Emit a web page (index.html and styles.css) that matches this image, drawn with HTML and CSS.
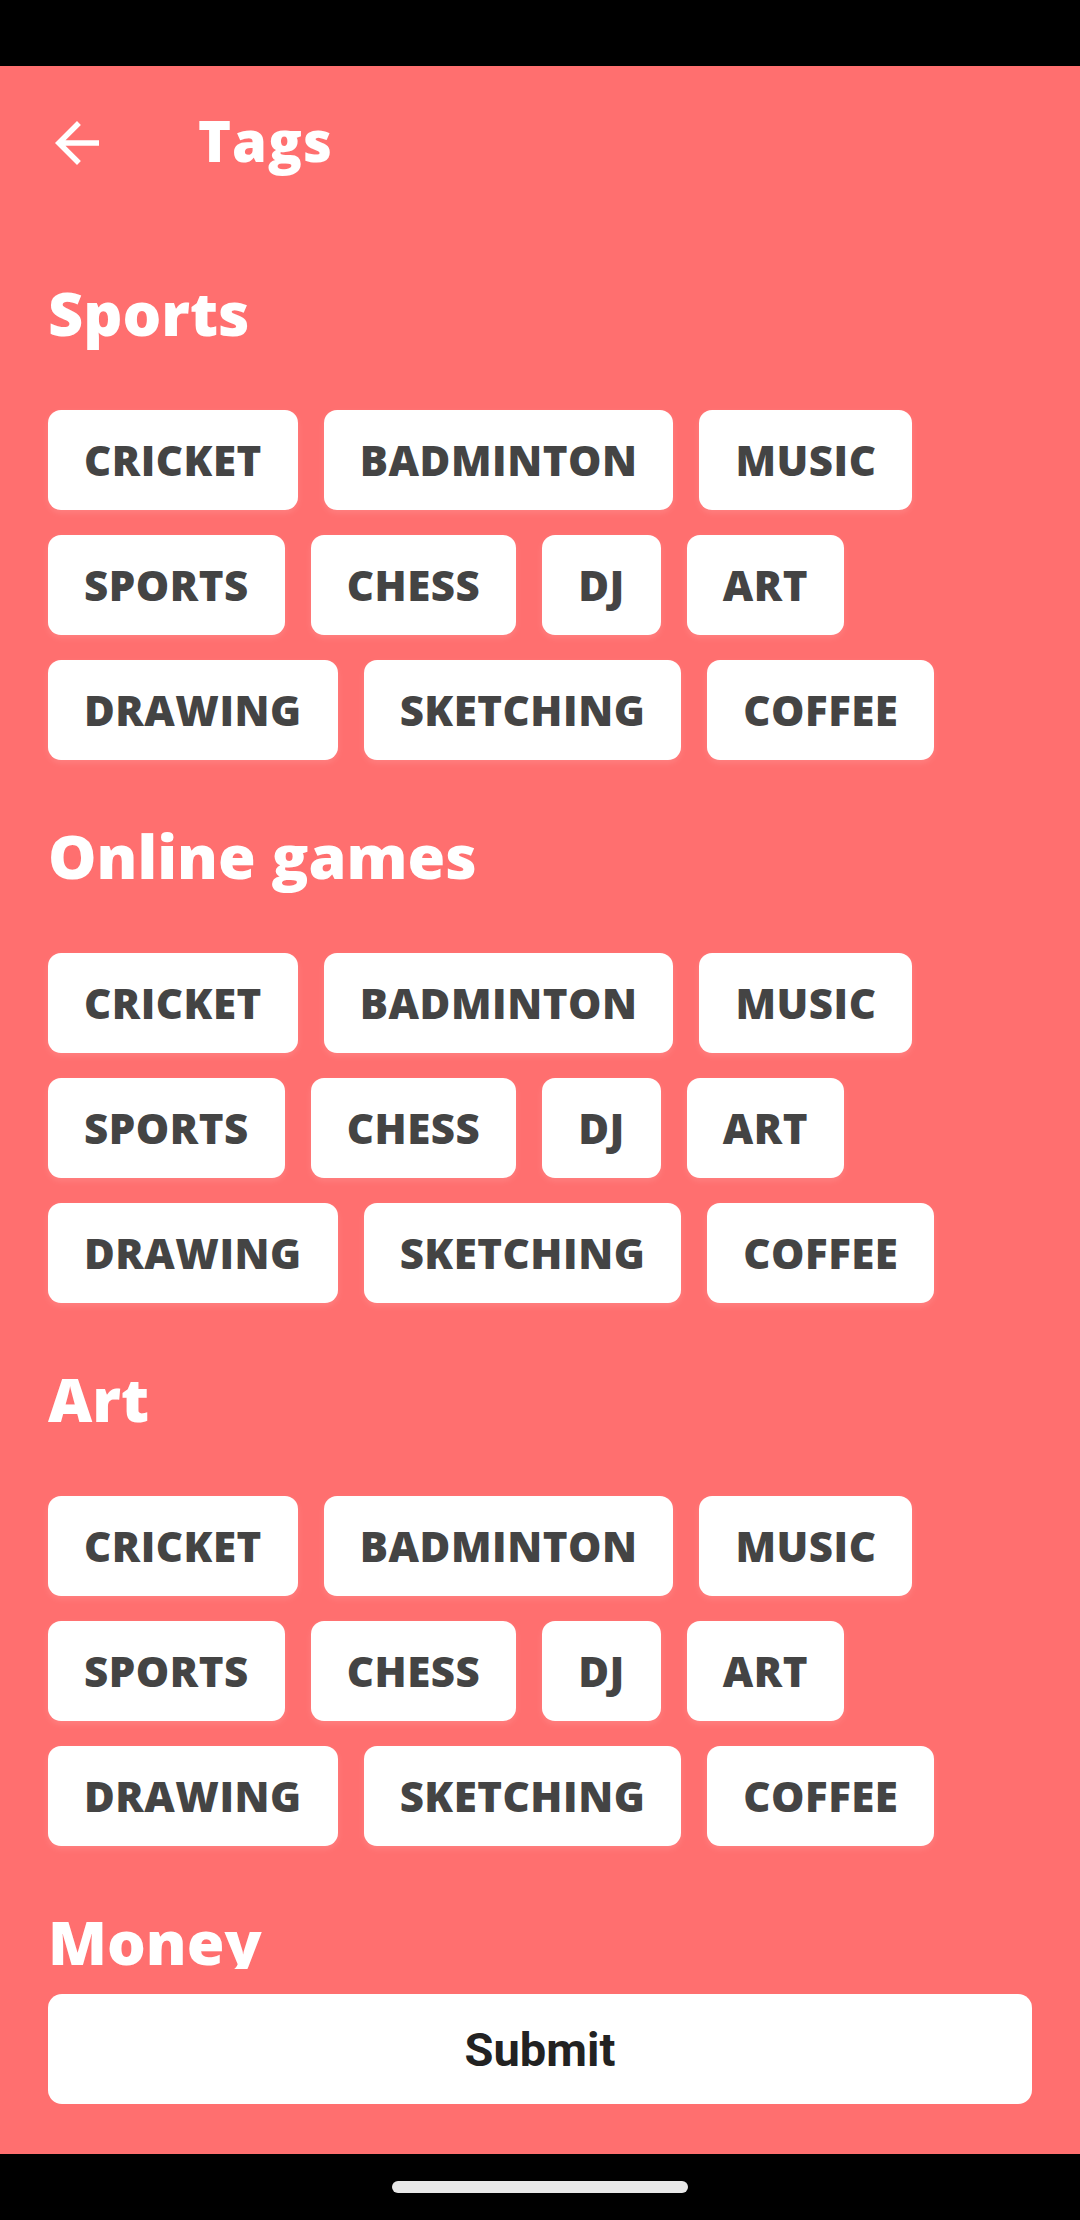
FILE: index.html
```html
<!DOCTYPE html>
<html>
<head>
<meta charset="utf-8">
<link rel="stylesheet" href="styles.css">
</head>
<body>
<div class="statusbar"></div>
<div class="app">
  <header class="appbar">
    <svg class="back" viewBox="0 0 24 24"><path d="M20 11H7.83l5.59-5.59L12 4l-8 8 8 8 1.41-1.41L7.83 13H20v-2z" fill="#fff"/></svg>
    <h1 class="title">Tags</h1>
  </header>
  <main class="scroll">
    <section class="group">
      <h2 class="group-title">Sports</h2>
      <div class="chips">
        <span class="chip">CRICKET</span><span class="chip">BADMINTON</span><span class="chip">MUSIC</span>
        <span class="chip">SPORTS</span><span class="chip">CHESS</span><span class="chip">DJ</span><span class="chip">ART</span>
        <span class="chip">DRAWING</span><span class="chip">SKETCHING</span><span class="chip">COFFEE</span>
      </div>
    </section>
    <section class="group">
      <h2 class="group-title">Online games</h2>
      <div class="chips">
        <span class="chip">CRICKET</span><span class="chip">BADMINTON</span><span class="chip">MUSIC</span>
        <span class="chip">SPORTS</span><span class="chip">CHESS</span><span class="chip">DJ</span><span class="chip">ART</span>
        <span class="chip">DRAWING</span><span class="chip">SKETCHING</span><span class="chip">COFFEE</span>
      </div>
    </section>
    <section class="group">
      <h2 class="group-title">Art</h2>
      <div class="chips">
        <span class="chip">CRICKET</span><span class="chip">BADMINTON</span><span class="chip">MUSIC</span>
        <span class="chip">SPORTS</span><span class="chip">CHESS</span><span class="chip">DJ</span><span class="chip">ART</span>
        <span class="chip">DRAWING</span><span class="chip">SKETCHING</span><span class="chip">COFFEE</span>
      </div>
    </section>
    <section class="group">
      <h2 class="group-title">Money</h2>
    </section>
  </main>
  <div class="footer">
    <button class="submit">Submit</button>
  </div>
</div>
<div class="navbar"><div class="pill"></div></div>
</body>
</html>
```
FILE: styles.css
```css
* { box-sizing: border-box; }
html, body {
  margin: 0;
  padding: 0;
  background: #000;
  width: 1080px;
  height: 2220px;
  overflow: hidden;
}
.statusbar {
  height: 66px;
  background: #000;
}
.app {
  height: 2088px;
  background: #ff6f6f;
  display: flex;
  flex-direction: column;
}
.appbar {
  height: 154px;
  flex: none;
  display: flex;
  align-items: center;
  padding-left: 44px;
  gap: 88px;
}
.back {
  width: 66px;
  height: 66px;
  display: block;
}
.title {
  margin: 0;
  padding-bottom: 7px;
  font-family: "Open Sans", sans-serif;
  font-weight: 800;
  font-size: 56px;
  line-height: 56px;
  letter-spacing: 1px;
  color: #fff;
}
.scroll {
  height: 1749px;
  flex: none;
  overflow: hidden;
  padding: 62px 48px 0 48px;
}
.group {
  margin-bottom: 65px;
}
.group-title {
  margin: 0 0 67px 0;
  font-family: "Open Sans", sans-serif;
  font-weight: 800;
  font-size: 61px;
  line-height: 61px;
  color: #fff;
}
.chips {
  display: flex;
  flex-wrap: wrap;
  column-gap: 26px;
  row-gap: 25px;
}
.chip {
  height: 100px;
  display: flex;
  align-items: center;
  padding: 0 36px;
  background: #fff;
  border-radius: 13px;
  font-family: "Open Sans", sans-serif;
  font-weight: 800;
  font-size: 42px;
  line-height: 42px;
  letter-spacing: 0.5px;
  color: #444;
  box-shadow: 0 3px 6px rgba(255, 255, 255, 0.12);
}
.footer {
  flex: 1;
  padding: 25px 48px 50px 48px;
}
.submit {
  display: block;
  width: 100%;
  height: 110px;
  border: none;
  border-radius: 14px;
  background: #fff;
  font-family: Roboto, sans-serif;
  font-weight: 700;
  font-size: 47px;
  color: #222;
  padding: 0;
}
.navbar {
  height: 66px;
  background: #000;
  display: flex;
  justify-content: center;
  padding-top: 27px;
}
.pill {
  width: 296px;
  height: 12px;
  border-radius: 6px;
  background: #e8e8e8;
}
```
